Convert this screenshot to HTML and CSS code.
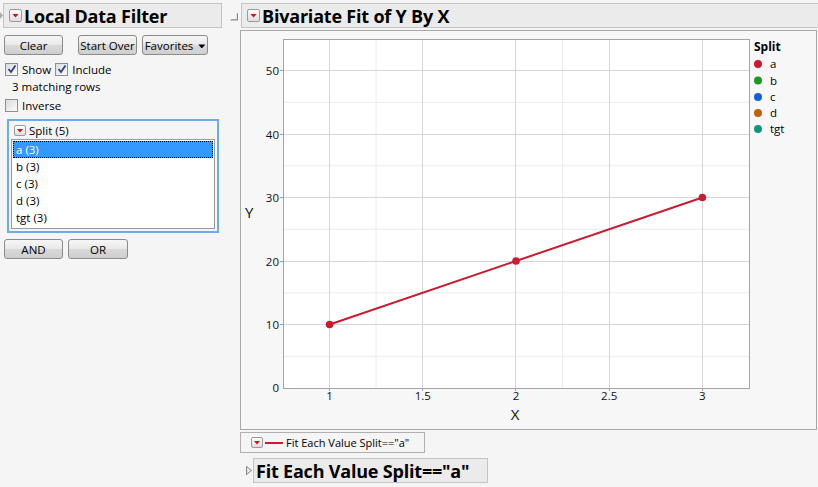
FILE: index.html
```html
<!DOCTYPE html>
<html lang="en">
<head>
    <meta charset="UTF-8">
    <title>Local Data Filter - Bivariate Fit</title>
    <link rel="stylesheet" href="styles.css">
</head>
<body>
<div class="app">
    <div class="filter">
        <div class="outline-row">
            <span class="stub"></span>
            <div class="title-bar">
                <span class="hotspot"></span>
                <span class="title">Local Data Filter</span>
            </div>
        </div>
        <div class="btn-row">
            <button class="btn btn-clear">Clear</button>
            <button class="btn btn-start">Start Over</button>
            <button class="btn btn-fav">Favorites <span class="caret"></span></button>
        </div>
        <div class="check-row">
            <span class="box checked"><svg width="10" height="10" viewBox="0 0 10 10"><path d="M1.5 5 L4 8 L8.5 1.5" fill="none" stroke="#2f3f8f" stroke-width="1.8"/></svg></span>
            <span class="check-label">Show</span>
            <span class="box checked"><svg width="10" height="10" viewBox="0 0 10 10"><path d="M1.5 5 L4 8 L8.5 1.5" fill="none" stroke="#2f3f8f" stroke-width="1.8"/></svg></span>
            <span class="check-label">Include</span>
        </div>
        <div class="matching">3 matching rows</div>
        <div class="check-row inverse">
            <span class="box"></span>
            <span class="check-label">Inverse</span>
        </div>
        <div class="split-panel">
            <div class="split-head">
                <span class="hotspot small"></span>
                <span>Split (5)</span>
            </div>
            <ul class="split-list">
                <li class="selected">a (3)</li>
                <li>b (3)</li>
                <li>c (3)</li>
                <li>d (3)</li>
                <li>tgt (3)</li>
            </ul>
        </div>
        <div class="btn-row logic">
            <button class="btn btn-and">AND</button>
            <button class="btn btn-or">OR</button>
        </div>
    </div>

    <div class="report">
        <div class="outline-row">
            <span class="open-tri"></span>
            <div class="title-bar wide">
                <span class="hotspot"></span>
                <span class="title">Bivariate Fit of Y By X</span>
            </div>
        </div>
        <div class="chart-frame">
            <svg class="chart" width="575" height="398" viewBox="0 0 575 398">
                <rect x="42" y="8" width="466" height="349" fill="#fff"/>
                <g stroke="#ececec" stroke-width="1">
                    <line x1="135.1" y1="8" x2="135.1" y2="357"/>
                    <line x1="321.5" y1="8" x2="321.5" y2="357"/>
                    <line x1="42" y1="325.3" x2="508" y2="325.3"/>
                    <line x1="42" y1="261.8" x2="508" y2="261.8"/>
                    <line x1="42" y1="198.3" x2="508" y2="198.3"/>
                    <line x1="42" y1="134.8" x2="508" y2="134.8"/>
                    <line x1="42" y1="71.3" x2="508" y2="71.3"/>
                </g>
                <g stroke="#d6d6d6" stroke-width="1">
                    <line x1="88.5" y1="8" x2="88.5" y2="357"/>
                    <line x1="181.5" y1="8" x2="181.5" y2="357"/>
                    <line x1="274.5" y1="8" x2="274.5" y2="357"/>
                    <line x1="368.5" y1="8" x2="368.5" y2="357"/>
                    <line x1="461.5" y1="8" x2="461.5" y2="357"/>
                    <line x1="42" y1="293.5" x2="508" y2="293.5"/>
                    <line x1="42" y1="230.5" x2="508" y2="230.5"/>
                    <line x1="42" y1="166.5" x2="508" y2="166.5"/>
                    <line x1="42" y1="103.5" x2="508" y2="103.5"/>
                    <line x1="42" y1="39.5" x2="508" y2="39.5"/>
                </g>
                <g stroke="#a0a0a0" stroke-width="1">
                    <line x1="39" y1="293.5" x2="42" y2="293.5"/>
                    <line x1="39" y1="230.5" x2="42" y2="230.5"/>
                    <line x1="39" y1="166.5" x2="42" y2="166.5"/>
                    <line x1="39" y1="103.5" x2="42" y2="103.5"/>
                    <line x1="39" y1="39.5" x2="42" y2="39.5"/>
                    <line x1="88.5" y1="357" x2="88.5" y2="360"/>
                    <line x1="181.5" y1="357" x2="181.5" y2="360"/>
                    <line x1="274.5" y1="357" x2="274.5" y2="360"/>
                    <line x1="368.5" y1="357" x2="368.5" y2="360"/>
                    <line x1="461.5" y1="357" x2="461.5" y2="360"/>
                </g>
                <rect x="42.5" y="8.5" width="466" height="349" fill="none" stroke="#a4a4a4"/>
                <polyline points="88.6,293.5 275,230 461.4,166.5" fill="none" stroke="#cc1a30" stroke-width="2"/>
                <g fill="#cc1a30">
                    <circle cx="88.6" cy="293.5" r="3.8"/>
                    <circle cx="275" cy="230" r="3.8"/>
                    <circle cx="461.4" cy="166.5" r="3.8"/>
                </g>
                <g class="tick" text-anchor="end">
                    <text x="38" y="361">0</text>
                    <text x="38" y="297.5">10</text>
                    <text x="38" y="234.5">20</text>
                    <text x="38" y="170.5">30</text>
                    <text x="38" y="107.5">40</text>
                    <text x="38" y="43.5">50</text>
                </g>
                <g class="tick" text-anchor="middle">
                    <text x="88.6" y="369">1</text>
                    <text x="181.8" y="369">1.5</text>
                    <text x="275" y="369">2</text>
                    <text x="368.2" y="369">2.5</text>
                    <text x="461.4" y="369">3</text>
                </g>
                <text class="axis-label" x="4" y="187">Y</text>
                <text class="axis-label" x="274" y="389" text-anchor="middle">X</text>
                <text class="legend-title" x="513" y="20">Split</text>
                <g class="legend">
                    <circle cx="517" cy="33" r="4" fill="#cc1a30"/>
                    <text x="529" y="37">a</text>
                    <circle cx="517" cy="49.5" r="4" fill="#1b9a22"/>
                    <text x="529" y="53.5">b</text>
                    <circle cx="517" cy="66" r="4" fill="#1460d9"/>
                    <text x="529" y="70">c</text>
                    <circle cx="517" cy="82" r="4" fill="#c1620e"/>
                    <text x="529" y="86">d</text>
                    <circle cx="517" cy="98" r="4" fill="#10987a"/>
                    <text x="529" y="102">tgt</text>
                </g>
            </svg>
        </div>
        <div class="fit-legend">
            <span class="hotspot small"></span>
            <span class="fit-line"></span>
            <span>Fit Each Value Split=="a"</span>
        </div>
        <div class="outline-row closed">
            <span class="closed-tri"></span>
            <div class="title-bar fit-bar">
                <span class="title">Fit Each Value Split=="a"</span>
            </div>
        </div>
    </div>
</div>
</body>
</html>
```

FILE: styles.css
```css
body {
    margin: 0;
    background-color: #f5f5f5;
    font-family: "Open Sans", "Noto Sans", sans-serif;
    font-size: 11.5px;
    color: #000;
}
.app {
    display: flex;
    width: 818px;
    height: 487px;
    overflow: hidden;
}
.filter {
    width: 228px;
    flex: none;
}
.report {
    flex: 1;
    padding-left: 1px;
}

/* outline headers */
.outline-row {
    display: flex;
    align-items: center;
    margin-top: 3px;
}
.title-bar {
    display: flex;
    align-items: center;
    height: 23px;
    background-color: #ebebeb;
    border: 1px solid #c4c4c4;
    width: 217px;
}
.title-bar.wide {
    flex: 1;
    border-right: none;
    margin-left: 3px;
}
.title {
    font-weight: bold;
    font-size: 18px;
    letter-spacing: -0.2px;
    margin-left: 2px;
    white-space: nowrap;
}
.stub {
    width: 3px;
    height: 7px;
    background-color: #aaa;
    clip-path: polygon(0 0, 100% 50%, 0 100%);
}
.open-tri {
    width: 8px;
    height: 8px;
    margin-left: 1px;
    margin-top: 2px;
    background-color: #888;
    clip-path: polygon(100% 0, 100% 100%, 0 100%, 15% 85%, 85% 85%, 85% 15%);
}
.closed-tri {
    width: 6px;
    height: 10px;
    margin-left: 17px;
    background-color: #8a8a8a;
    clip-path: polygon(0 0, 100% 50%, 0 100%, 0 0, 20% 20%, 20% 80%, 75% 50%, 20% 20%);
}
.hotspot {
    width: 11px;
    height: 11px;
    margin-left: 5px;
    border: 1px solid #9a9a9a;
    border-radius: 2px;
    background: linear-gradient(#fdfdfd, #dedede);
    display: inline-flex;
    justify-content: center;
    align-items: center;
    flex: none;
}
.hotspot::after {
    content: "";
    width: 7px;
    height: 4px;
    background-color: #d0111b;
    clip-path: polygon(0 0, 100% 0, 50% 100%);
}
.hotspot.small {
    width: 10px;
    height: 9px;
    margin-left: 0;
}

/* buttons */
.btn-row {
    display: flex;
    margin-top: 7px;
    margin-left: 4px;
}
.btn {
    height: 20px;
    padding: 0;
    font-family: inherit;
    font-size: 11.5px;
    color: #000;
    border: 1px solid #8b8b8b;
    border-radius: 3px;
    background: linear-gradient(#f6f6f6 0%, #e9e9e9 50%, #d9d9d9 51%, #cfcfcf 100%);
}
.btn-clear { width: 59px; }
.btn-start { width: 59px; margin-left: 15px; }
.btn-fav { width: 66px; margin-left: 5px; }
.caret {
    display: inline-block;
    width: 7px;
    height: 4px;
    margin-left: 2px;
    vertical-align: middle;
    background-color: #000;
    clip-path: polygon(0 0, 100% 0, 50% 100%);
}
.btn-and { width: 59px; }
.btn-or { width: 60px; margin-left: 5px; }
.logic {
    margin-top: 6px;
}

/* check boxes */
.check-row {
    display: flex;
    align-items: center;
    margin-top: 7px;
    margin-left: 5px;
    height: 14px;
}
.box {
    width: 11px;
    height: 11px;
    border: 1px solid #8e8f8f;
    background: linear-gradient(135deg, #dcdcdc, #fbfbfb);
    display: inline-flex;
    justify-content: center;
    align-items: center;
}
.check-label {
    margin-left: 4px;
    margin-right: 4px;
}
.matching {
    margin-left: 12px;
    margin-top: 3px;
    height: 16px;
    line-height: 16px;
}
.inverse {
    margin-top: 3px;
}

/* split list */
.split-panel {
    margin: 7px 0 0 7px;
    width: 212px;
    height: 114px;
    border: 2px solid #6aacef;
    box-sizing: border-box;
    padding: 1px 2px;
}
.split-head {
    display: flex;
    align-items: center;
    height: 17px;
    padding-left: 3px;
}
.split-head span:last-child {
    margin-left: 3px;
}
.split-list {
    list-style: none;
    margin: 0;
    padding: 1px;
    height: 90px;
    box-sizing: border-box;
    background-color: #fff;
    border: 1px solid #9a9a9a;
}
.split-list li {
    height: 17px;
    line-height: 17px;
    padding-left: 3px;
}
.split-list li.selected {
    background-color: #3399ff;
    color: #fff;
    outline: 1px dotted #000;
    outline-offset: -1px;
}

/* chart */
.chart-frame {
    margin-top: 2px;
    margin-left: 11px;
    width: 575px;
    height: 398px;
    border: 1px solid #a8a8a8;
    background-color: #f7f7f7;
}
.chart {
    display: block;
    font-family: "Open Sans", "Noto Sans", sans-serif;
}
.tick {
    font-size: 11.5px;
    fill: #111;
}
.axis-label {
    font-size: 15px;
    fill: #111;
}
.legend-title {
    font-size: 12px;
    font-weight: bold;
}
.legend text {
    font-size: 11.5px;
}
.fit-legend {
    display: flex;
    align-items: center;
    margin-top: 2px;
    margin-left: 11px;
    width: 185px;
    height: 21px;
    border: 1px solid #b0b0b0;
    font-size: 11px;
    padding-left: 10px;
    box-sizing: border-box;
}
.fit-line {
    width: 18px;
    height: 2px;
    background-color: #cc1a30;
    margin: 0 3px 0 2px;
}
.closed {
    margin-top: 5px;
}
.fit-bar {
    width: 233px;
    margin-left: 1px;
}
```
